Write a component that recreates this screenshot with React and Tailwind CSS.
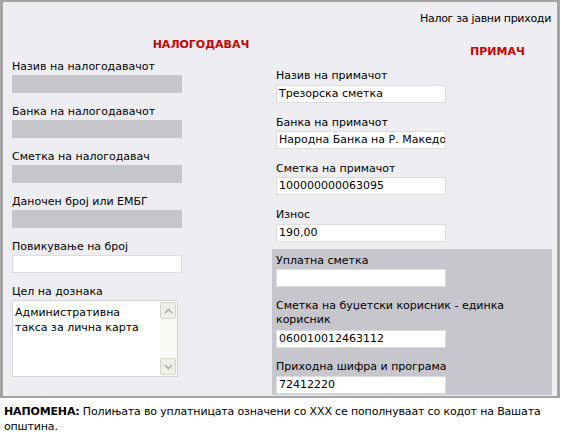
import React from "react";

const font = { fontFamily: '"DejaVu Sans", Verdana, sans-serif' };

function Label({ children, className = "" }) {
  return <div className={`text-[11px] leading-[14px] text-black ${className}`}>{children}</div>;
}

function GreyBox() {
  return <div className="mt-[1px] h-[18px] w-[170px] bg-[#c6c6ca]" />;
}

function Field({ value = "", className = "" }) {
  return (
    <div className={`h-[18px] w-[170px] border border-[#dcdcdc] bg-white px-[2px] text-[11px] leading-[16px] text-black overflow-hidden whitespace-nowrap ${className}`}>
      {value}
    </div>
  );
}

function Chevron({ up }) {
  return (
    <svg width="9" height="6" viewBox="0 0 9 6">
      <path
        d={up ? "M1 5 L4.5 1.5 L8 5" : "M1 1 L4.5 4.5 L8 1"}
        fill="none"
        stroke="#a8b0c0"
        strokeWidth="1.6"
      />
    </svg>
  );
}

function TextArea() {
  return (
    <div className="mt-[1px] flex h-[77px] w-[166px] border border-[#d4d4d4] bg-white">
      <div className="flex-1 px-[2px] pt-[4px] text-[11px] leading-[15px] text-black">
        Административна
        <br />
        такса за лична карта
      </div>
      <div className="flex w-[17px] flex-col justify-between bg-[#fafaf6] py-[1px] pr-[1px]">
        <div className="flex h-[17px] items-center justify-center rounded-[2px] border border-[#d6d6c8] bg-[#efefe6]">
          <Chevron up />
        </div>
        <div className="flex h-[17px] items-center justify-center rounded-[2px] border border-[#d6d6c8] bg-[#efefe6]">
          <Chevron />
        </div>
      </div>
    </div>
  );
}

export default function App() {
  return (
    <div className="h-[436px] w-[566px] bg-white" style={font}>
      <div className="flex h-[398px] w-[560px] border-2 border-l-[3px] border-r-[3px] border-[#a4a4a4] bg-[#eeeef2]">
        {/* Налогодавач */}
        <div className="w-[269px] pl-[9px] pt-[36px]">
          <div className="pl-[118px] text-center text-[11px] font-bold leading-[14px] text-[#c80000]">
            НАЛОГОДАВАЧ
          </div>
          <Label className="mt-[8px]">Назив на налогодавачот</Label>
          <GreyBox />
          <Label className="mt-[12px]">Банка на налогодавачот</Label>
          <GreyBox />
          <Label className="mt-[12px]">Сметка на налогодавач</Label>
          <GreyBox />
          <Label className="mt-[12px]">Даночен број или ЕМБГ</Label>
          <GreyBox />
          <Label className="mt-[12px]">Повикување на број</Label>
          <Field className="mt-[1px]" />
          <Label className="mt-[12px]">Цел на дознака</Label>
          <TextArea />
        </div>

        {/* Примач */}
        <div className="flex flex-1 flex-col pr-[5px] pt-[10px]">
          <div className="pr-[1px] text-right text-[11px] leading-[14px] tracking-[-0.3px] text-black">Налог за јавни приходи</div>
          <div className="mt-[19px] pl-[198px] text-[11px] font-bold leading-[14px] text-[#c80000]">ПРИМАЧ</div>
          <div className="pl-[4px]">
            <Label className="mt-[10px]">Назив на примачот</Label>
            <Field className="mt-[2px]" value="Трезорска сметка" />
            <Label className="mt-[13px]">Банка на примачот</Label>
            <Field className="mt-[1px]" value="Народна Банка на Р. Македонија" />
            <Label className="mt-[13px]">Сметка на примачот</Label>
            <Field className="mt-[1px]" value="100000000063095" />
            <Label className="mt-[13px]">Износ</Label>
            <Field className="mt-[2px]" value="190,00" />
          </div>
          <div className="mt-[7px] mb-[1px] flex-1 bg-[#c6c6cc] pl-[4px] pt-[5px]">
            <Label>Уплатна сметка</Label>
            <Field className="mt-[1px]" />
            <Label className="mt-[12px] w-[240px]">Сметка на буџетски корисник - единка корисник</Label>
            <Field className="mt-[3px]" value="060010012463112" />
            <Label className="mt-[12px]">Приходна шифра и програма</Label>
            <Field className="mt-[2px]" value="72412220" />
          </div>
        </div>
      </div>

      <div className="pl-[4px] pt-[6px] text-[11px] leading-[15px] tracking-[-0.15px] text-black">
        <b>НАПОМЕНА:</b> Полињата во уплатницата означени со XXX се пополнуваат со кодот на Вашата
        <br />
        општина.
      </div>
    </div>
  );
}
